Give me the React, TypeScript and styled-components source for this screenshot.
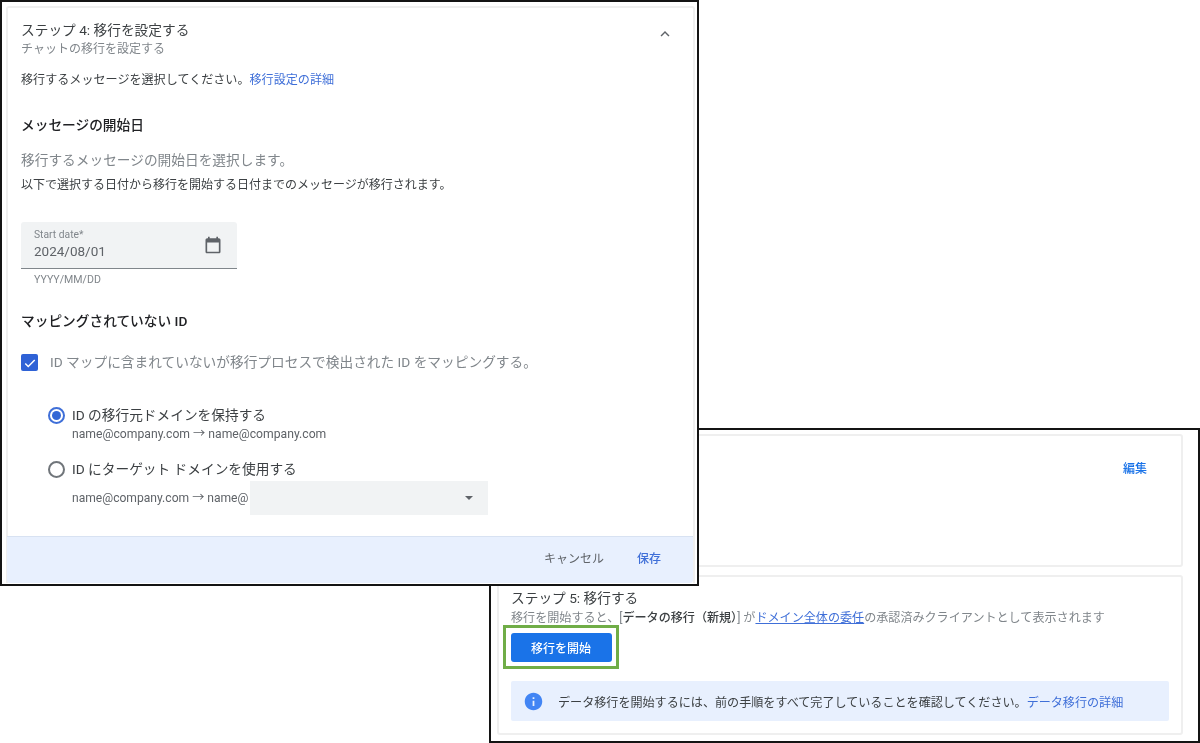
import styled, { createGlobalStyle } from "styled-components";

const GlobalStyle = createGlobalStyle`
  * {
    box-sizing: border-box;
  }
  body {
    margin: 0;
    background: #fff;
    color: #3c4043;
    font-family: Roboto, "Noto Sans CJK JP", sans-serif;
  }
`;

// the reference is a slightly soft, scaled screenshot
const Canvas = styled.div`
  position: relative;
  width: 1200px;
  height: 743px;
  overflow: hidden;
  filter: blur(0.35px);
`;

// the two windows are pasted screenshots lying on a free canvas
const Window = styled.section<{ $left: number; $top: number; $width: number; $height: number; $z: number }>`
  position: absolute;
  left: ${(p) => p.$left}px;
  top: ${(p) => p.$top}px;
  width: ${(p) => p.$width}px;
  height: ${(p) => p.$height}px;
  z-index: ${(p) => p.$z};
  display: flex;
  flex-direction: column;
  background: #fff;
  border: 2px solid #141414;
`;

const SettingsCard = styled.div`
  flex: 1;
  margin: 4px 2px 1px 4px;
  display: flex;
  flex-direction: column;
  border: 2px solid #efefef;
  border-bottom: none;
  border-radius: 3px 3px 0 0;
`;

const Body = styled.div`
  flex: 1;
  padding: 13px 13px 0 13px;
  display: flex;
  flex-direction: column;
  align-items: flex-start;
`;

const HeaderRow = styled.div`
  align-self: stretch;
  display: flex;
  justify-content: space-between;
`;

const StepTitle = styled.h2`
  margin: 0;
  font-size: 13.7px;
  line-height: 18px;
  font-weight: 400;
  color: #3c4043;
`;

const StepSub = styled.div`
  margin-top: 2px;
  font-size: 12px;
  line-height: 16px;
  color: #80868b;
`;

const ChevronBtn = styled.span`
  display: flex;
  margin: 4px 6px 0 0;
  color: #5f6368;
`;

const Intro = styled.p`
  margin: 14px 0 0;
  font-size: 12.08px;
  line-height: 18px;
  color: #3c4043;
`;

const Link = styled.a<{ $underline?: boolean }>`
  color: #3f6fd8;
  text-decoration: ${(p) => (p.$underline ? "underline" : "none")};
`;

const Heading = styled.h3<{ $top: number }>`
  margin: ${(p) => p.$top}px 0 0;
  font-size: 13.7px;
  line-height: 18px;
  font-weight: 500;
  color: #202124;
`;

const Lead = styled.p`
  margin: 17px 0 0;
  font-size: 13.7px;
  line-height: 18px;
  color: #80868b;
`;

const Note = styled.p`
  margin: 8px 0 0;
  font-size: 12px;
  line-height: 16px;
  color: #3c4043;
`;

const DateField = styled.div`
  margin-top: 29px;
  width: 216px;
  height: 47px;
  padding: 6px 14px 0 13px;
  display: flex;
  justify-content: space-between;
  align-items: flex-start;
  background: #f1f3f4;
  border-bottom: 1px solid #80868b;
  border-radius: 3px 3px 0 0;
`;

const FieldLabel = styled.div`
  font-size: 10.3px;
  line-height: 13px;
  color: #80868b;
`;

const FieldValue = styled.div`
  margin-top: 1px;
  font-size: 13.5px;
  line-height: 18px;
  color: #5f6368;
`;

const FieldIcon = styled.span`
  display: flex;
  margin-top: 7px;
`;

const Helper = styled.div`
  margin: 4px 0 0 13px;
  font-size: 10.6px;
  line-height: 14px;
  color: #80868b;
`;

const CheckRow = styled.label`
  margin-top: 23px;
  display: flex;
  align-items: center;
  gap: 12px;
  font-size: 13.7px;
  line-height: 18px;
  color: #80868b;
`;

const CheckBox = styled.span`
  width: 17px;
  height: 17px;
  margin-top: 1px;
  display: flex;
  align-items: center;
  justify-content: center;
  background: #2f62d6;
  border-radius: 2px;
`;

const RadioRow = styled.label<{ $top: number }>`
  margin: ${(p) => p.$top}px 0 0 27px;
  display: flex;
  align-items: center;
  gap: 7px;
  font-size: 13.7px;
  line-height: 18px;
  color: #3c4043;
`;

const Radio = styled.span<{ $on?: boolean }>`
  width: 17px;
  height: 17px;
  display: flex;
  align-items: center;
  justify-content: center;
  border-radius: 50%;
  border: 2px solid ${(p) => (p.$on ? "#3f6fd8" : "#70757a")};

  &::after {
    content: "";
    width: 9px;
    height: 9px;
    border-radius: 50%;
    background: ${(p) => (p.$on ? "#3367d6" : "transparent")};
  }
`;

const Email = styled.div`
  margin: 2px 0 0 51px;
  font-size: 12.2px;
  line-height: 16px;
  color: #5f6368;
`;

const EmailRow = styled.div`
  margin: 3px 0 0 51px;
  display: flex;
  align-items: center;
  font-size: 12.1px;
  color: #5f6368;
`;

const EmailText = styled.span`
  margin-bottom: 3px;
`;

const DomainSelect = styled.div`
  width: 238px;
  height: 34px;
  margin-left: 2px;
  padding-right: 15px;
  display: flex;
  align-items: center;
  justify-content: flex-end;
  background: #f1f3f4;
`;

const Caret = styled.span`
  width: 0;
  height: 0;
  border-left: 4px solid transparent;
  border-right: 4px solid transparent;
  border-top: 4px solid #5f6368;
`;

const Footer = styled.div`
  height: 47px;
  margin: 0 0 0 -1px;
  padding: 0 32px 5px 0;
  display: flex;
  align-items: center;
  justify-content: flex-end;
  gap: 33px;
  background: #e8f0fe;
  border-top: 1px solid #d8e2f2;
  border-radius: 0 0 3px 3px;
  font-size: 12px;
`;

const TextBtn = styled.button<{ $primary?: boolean }>`
  padding: 0;
  border: none;
  background: none;
  font: inherit;
  font-weight: ${(p) => (p.$primary ? 500 : 400)};
  color: ${(p) => (p.$primary ? "#3f6fd8" : "#5f6368")};
`;

const RightColumn = styled.div`
  flex: 1;
  padding: 4px 15px 6px 6px;
  display: flex;
  flex-direction: column;
  gap: 8px;
`;

const SummaryCard = styled.div`
  height: 133px;
  padding: 25px 34px 0 0;
  display: flex;
  justify-content: flex-end;
  border: 2px solid #efefef;
  border-radius: 3px;
`;

const EditLink = styled.a`
  height: 16px;
  font-size: 12px;
  line-height: 16px;
  font-weight: 500;
  color: #1a73e8;
`;

const MigrateCard = styled.div`
  flex: 1;
  padding: 12px 12px 0 12px;
  display: flex;
  flex-direction: column;
  align-items: flex-start;
  border: 2px solid #efefef;
  border-radius: 3px;
`;

const Desc = styled.p`
  margin: 3px 0 -1px;
  font-size: 12.08px;
  line-height: 16px;
  color: #80868b;

  strong {
    font-weight: 500;
    color: #3c4043;
  }
`;

const Highlight = styled.div`
  margin-left: -8px;
  width: 116px;
  height: 44px;
  display: flex;
  align-items: center;
  justify-content: center;
  border: 3.5px solid #70ad47;
`;

const StartBtn = styled.button`
  width: 101px;
  height: 29px;
  padding: 0;
  border: none;
  border-radius: 3px;
  background: #1a73e8;
  color: #fff;
  font: inherit;
  font-size: 12px;
  font-weight: 500;
`;

const InfoBox = styled.div`
  align-self: stretch;
  margin-top: 12px;
  height: 40px;
  padding-left: 12px;
  display: flex;
  align-items: center;
  gap: 14px;
  background: #e8f0fe;
  border-radius: 2px;
  font-size: 12.08px;
  color: #3c4043;
`;

export default function App() {
  return (
    <Canvas>
      <GlobalStyle />

      <Window $left={0} $top={0} $width={699} $height={586} $z={2}>
        <SettingsCard>
          <Body>
            <HeaderRow>
              <div>
                <StepTitle>ステップ 4: 移行を設定する</StepTitle>
                <StepSub>チャットの移行を設定する</StepSub>
              </div>
              <ChevronBtn>
                <svg width="18" height="18" viewBox="0 0 24 24" fill="currentColor">
                  <path d="M7.41 15.41 12 10.83l4.59 4.58L18 14l-6-6-6 6z" />
                </svg>
              </ChevronBtn>
            </HeaderRow>

            <Intro>
              移行するメッセージを選択してください。<Link>移行設定の詳細</Link>
            </Intro>

            <Heading $top={27}>メッセージの開始日</Heading>
            <Lead>移行するメッセージの開始日を選択します。</Lead>
            <Note>以下で選択する日付から移行を開始する日付までのメッセージが移行されます。</Note>

            <DateField>
              <div>
                <FieldLabel>Start date*</FieldLabel>
                <FieldValue>2024/08/01</FieldValue>
              </div>
              <FieldIcon>
                <svg width="20" height="20" viewBox="0 0 24 24" fill="#5f6368">
                  <path d="M19 4h-1V2h-2v2H8V2H6v2H5c-1.1 0-2 .9-2 2v14c0 1.1.9 2 2 2h14c1.1 0 2-.9 2-2V6c0-1.1-.9-2-2-2zm0 16H5V9h14v11z" />
                </svg>
              </FieldIcon>
            </DateField>
            <Helper>YYYY/MM/DD</Helper>

            <Heading $top={25}>マッピングされていない ID</Heading>

            <CheckRow>
              <CheckBox>
                <svg width="14" height="14" viewBox="0 0 24 24" fill="#fff">
                  <path d="M9 16.2 4.8 12l-1.8 1.8L9 19.8 21 7.8 19.2 6z" />
                </svg>
              </CheckBox>
              ID マップに含まれていないが移行プロセスで検出された ID をマッピングする。
            </CheckRow>

            <RadioRow $top={35}>
              <Radio $on />
              ID の移行元ドメインを保持する
            </RadioRow>
            <Email>name@company.com → name@company.com</Email>

            <RadioRow $top={18}>
              <Radio />
              ID にターゲット ドメインを使用する
            </RadioRow>
            <EmailRow>
              <EmailText>name@company.com → name@</EmailText>
              <DomainSelect>
                <Caret />
              </DomainSelect>
            </EmailRow>
          </Body>

          <Footer>
            <TextBtn>キャンセル</TextBtn>
            <TextBtn $primary>保存</TextBtn>
          </Footer>
        </SettingsCard>
      </Window>

      <Window $left={489} $top={428} $width={711} $height={315} $z={1}>
        <RightColumn>
          <SummaryCard>
            <EditLink>編集</EditLink>
          </SummaryCard>

          <MigrateCard>
            <StepTitle>ステップ 5: 移行する</StepTitle>
            <Desc>
              移行を開始すると、[<strong>データの移行（新規）</strong>] が
              <Link $underline>ドメイン全体の委任</Link>の承認済みクライアントとして表示されます
            </Desc>
            <Highlight>
              <StartBtn>移行を開始</StartBtn>
            </Highlight>
            <InfoBox>
              <svg width="21" height="21" viewBox="0 0 24 24" fill="#4285f4">
                <path d="M12 2C6.48 2 2 6.48 2 12s4.48 10 10 10 10-4.48 10-10S17.52 2 12 2zm1 15h-2v-6h2v6zm0-8h-2V7h2v2z" />
              </svg>
              <span>
                データ移行を開始するには、前の手順をすべて完了していることを確認してください。
                <Link>データ移行の詳細</Link>
              </span>
            </InfoBox>
          </MigrateCard>
        </RightColumn>
      </Window>
    </Canvas>
  );
}
